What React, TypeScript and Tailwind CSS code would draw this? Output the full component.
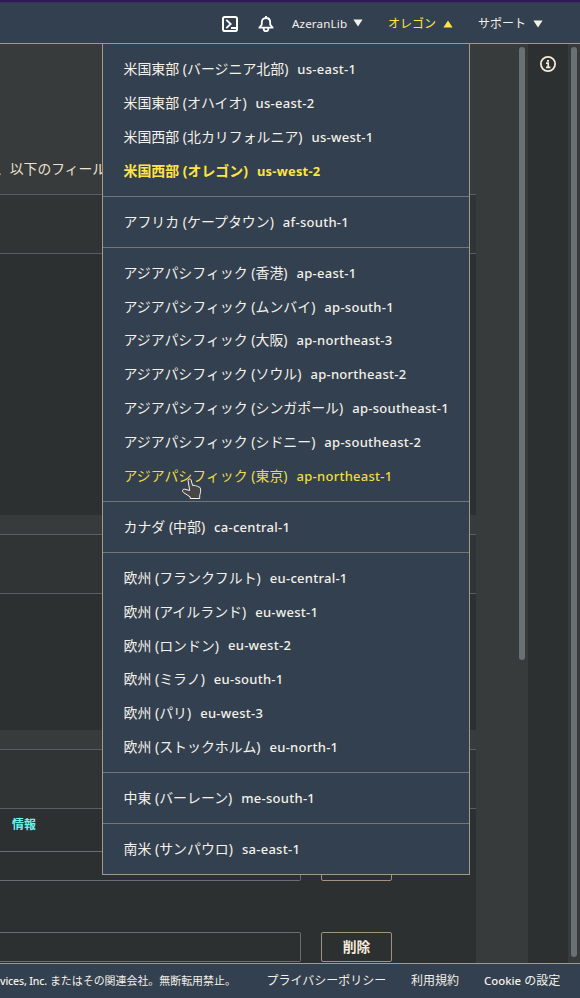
import React from 'react';

type Region = [string, string];

const groups: Region[][] = [
  [
    ['米国東部 (バージニア北部)', 'us-east-1'],
    ['米国東部 (オハイオ)', 'us-east-2'],
    ['米国西部 (北カリフォルニア)', 'us-west-1'],
    ['米国西部 (オレゴン)', 'us-west-2'],
  ],
  [['アフリカ (ケープタウン)', 'af-south-1']],
  [
    ['アジアパシフィック (香港)', 'ap-east-1'],
    ['アジアパシフィック (ムンバイ)', 'ap-south-1'],
    ['アジアパシフィック (大阪)', 'ap-northeast-3'],
    ['アジアパシフィック (ソウル)', 'ap-northeast-2'],
    ['アジアパシフィック (シンガポール)', 'ap-southeast-1'],
    ['アジアパシフィック (シドニー)', 'ap-southeast-2'],
    ['アジアパシフィック (東京)', 'ap-northeast-1'],
  ],
  [['カナダ (中部)', 'ca-central-1']],
  [
    ['欧州 (フランクフルト)', 'eu-central-1'],
    ['欧州 (アイルランド)', 'eu-west-1'],
    ['欧州 (ロンドン)', 'eu-west-2'],
    ['欧州 (ミラノ)', 'eu-south-1'],
    ['欧州 (パリ)', 'eu-west-3'],
    ['欧州 (ストックホルム)', 'eu-north-1'],
  ],
  [['中東 (バーレーン)', 'me-south-1']],
  [['南米 (サンパウロ)', 'sa-east-1']],
];

const CURRENT = 'us-west-2';
const HOVERED = 'ap-northeast-1';

function rowTone(code: string) {
  if (code === CURRENT) return 'font-bold text-[#ffe543]';
  if (code === HOVERED) return 'text-[#efdc42]';
  return 'text-[#f4f1e9]';
}

function RegionMenu() {
  return (
    <div className="absolute left-[102px] top-[43px] z-10 h-[832px] w-[368px] border border-[#a3988a] bg-[#33404f] pt-[8.3px]">
      {groups.map((group, i) => (
        <ul key={i} className={i > 0 ? 'mt-[8.1px] border-t border-[#6f7878] pt-[8px]' : ''}>
          {group.map(([name, code]) => (
            <li
              key={code}
              className={`flex h-[33.87px] items-center gap-[9px] whitespace-nowrap pl-[20.5px] leading-none ${rowTone(code)}`}
            >
              <span className="text-[13.93px]">{name}</span>
              <span
                className={
                  code === CURRENT
                    ? 'pt-px text-[12.9px] tracking-[0.25px]'
                    : 'pt-px text-[13px] font-medium tracking-[0.27px]'
                }
              >
                {code}
              </span>
            </li>
          ))}
        </ul>
      ))}
    </div>
  );
}

function Caret({ up = false }: { up?: boolean }) {
  return (
    <svg width="10" height="8" viewBox="0 0 10 8" fill="currentColor">
      <path d={up ? 'M0.4 7.6 5 0.4l4.6 7.2z' : 'M0.4 0.4h9.2L5 7.6z'} />
    </svg>
  );
}

function Header() {
  return (
    <header className="flex h-[44px] shrink-0 items-center border-b border-t-2 border-b-[#a3988f] border-t-[#2c1c51] bg-[#33404f] pl-[222px] pt-[2px] text-[12px] text-[#f4f1e9] shadow-[inset_0_1px_0_#3b2d66]">
      <svg width="16" height="16" viewBox="0 0 16 16" fill="none" stroke="#fff" className="shrink-0">
        <rect x="1" y="1" width="14" height="14" rx="1.8" strokeWidth="2" />
        <path d="M4.3 3.8 8.7 8l-4.4 4.2M9 12h5" strokeWidth="1.8" />
      </svg>
      <svg width="16" height="16" viewBox="0 0 16 16" fill="none" stroke="#fff" strokeWidth="1.8" className="ml-[20px] shrink-0">
        <path d="M8 0v2M1.3 11.7h13.4L12.2 8.6V6.4C12.2 3.8 10.6 2 8 2S3.8 3.8 3.8 6.4v2.2z" strokeLinejoin="round" />
        <path d="M5.7 12v.9c0 1.2.9 2.2 2.3 2.2s2.3-1 2.3-2.2V12" />
      </svg>
      <div className="ml-[18px] flex w-[96px] shrink-0 items-center">
        <span className="w-[61px] whitespace-nowrap pt-px text-[11.6px] tracking-[0.15px]">AzeranLib</span>
        <Caret />
      </div>
      <div className="flex w-[90px] shrink-0 items-center text-[#ffe543]">
        <span className="w-[55px] whitespace-nowrap pt-px">オレゴン</span>
        <Caret up />
      </div>
      <div className="flex shrink-0 items-center">
        <span className="w-[55px] whitespace-nowrap pt-px">サポート</span>
        <Caret />
      </div>
    </header>
  );
}

function CardHead() {
  return <div className="h-[60px] shrink-0 border-y border-[#595f60] bg-[#303434]" />;
}

function Field({ label }: { label: string }) {
  return (
    <div className="flex h-[30px] shrink-0 gap-[20px]">
      <div className="w-[301px] rounded-r-[2px] border border-l-0 border-[#696f70]" />
      <button className="w-[71px] rounded-[2px] border border-[#a3937e] pb-px text-[13.8px] font-bold leading-none text-[#f5ead9]">
        {label}
      </button>
    </div>
  );
}

function Content() {
  return (
    <main className="flex w-[476px] shrink-0 flex-col overflow-hidden bg-[#2c3030]">
      <div className="h-[150px] shrink-0 bg-[#383b3b] pt-[115px] text-[13.8px] leading-[20px] text-[#ede2d2]">
        <p className="-ml-[4px] whitespace-nowrap">、以下のフィール</p>
      </div>
      <CardHead />
      <div className="h-[261px] shrink-0" />
      <div className="h-[19px] shrink-0 bg-[#383b3b]" />
      <CardHead />
      <div className="h-[136px] shrink-0" />
      <div className="h-[19px] shrink-0 bg-[#383b3b]" />
      <CardHead />
      <div className="h-[42px] shrink-0 pl-[12px] pt-[6px] text-[12px] font-bold leading-[20px] text-[#68f5ef]">情報</div>
      <Field label="削除" />
      <div className="h-[51px] shrink-0" />
      <Field label="削除" />
    </main>
  );
}

function Footer() {
  return (
    <footer className="relative h-[35px] shrink-0 overflow-hidden border-t border-[#a3988f] bg-[#33404f] text-[12px] leading-[34px] text-[#f4f1e9]">
      <div className="flex whitespace-nowrap">
        <span className="flex w-[266.5px] shrink-0 gap-[3px] text-[11px]">
          <span className="text-[10.5px] font-medium tracking-[-0.15px]">vices, Inc.</span>
          <span className="text-[10.95px]">またはその関連会社。無断転用禁止。</span>
        </span>
        <span className="w-[144.5px] shrink-0">プライバシーポリシー</span>
        <span className="w-[73px] shrink-0">利用規約</span>
        <span className="shrink-0">
          <span className="text-[11.4px] font-medium">Cookie</span> の設定
        </span>
      </div>
    </footer>
  );
}

function Pointer() {
  return (
    <svg className="absolute left-[182px] top-[478px] z-20" width="20" height="22" viewBox="0 0 20 22">
      <path
        d="M6 2.2C6 .8 8.5.4 9 1.8l1.6 5.7 1.5-.2c.8-.1 1.5.2 1.8.8.9-.3 1.7 0 2.1.7 1.5-.2 2.3.8 2.5 2.1.3 2.5-.1 4.6-.8 6.4v3.2H8.2v-1.6L1.5 14.5c-1.6-1.1-1-3.6.8-3.4l5.4 1.4z"
        fill="#464646"
        stroke="#f5f2ed"
        strokeWidth="1"
        strokeLinejoin="round"
      />
    </svg>
  );
}

export default function App() {
  return (
    <div lang="ja" className="relative flex h-[998px] w-[580px] flex-col overflow-hidden bg-[#383b3b] font-['Noto_Sans','Noto_Sans_CJK_JP',sans-serif]">
      <Header />
      <div className="flex h-[919px] shrink-0">
        <Content />
        <div className="flex w-[52px] shrink-0 justify-end pr-[3px] pt-[3px]">
          <div className="h-[613px] w-[6px] rounded-full bg-[#697174]" />
        </div>
        <aside className="flex w-[40px] shrink-0 justify-center bg-[#2c3030] pt-[12px]">
          <svg width="16" height="16" viewBox="0 0 16 16" fill="none" stroke="#f5ead9">
            <circle cx="8" cy="8" r="7.1" strokeWidth="1.8" />
            <path d="M6 7.2h2.2v4.2M6 11.4h4.4M7 4.8h2" strokeWidth="1.7" />
          </svg>
        </aside>
        <div className="flex w-[12px] shrink-0 justify-center pt-[3px]">
          <div className="h-[910px] w-[6px] rounded-full bg-[#697174]" />
        </div>
      </div>
      <Footer />
      <RegionMenu />
      <Pointer />
    </div>
  );
}
